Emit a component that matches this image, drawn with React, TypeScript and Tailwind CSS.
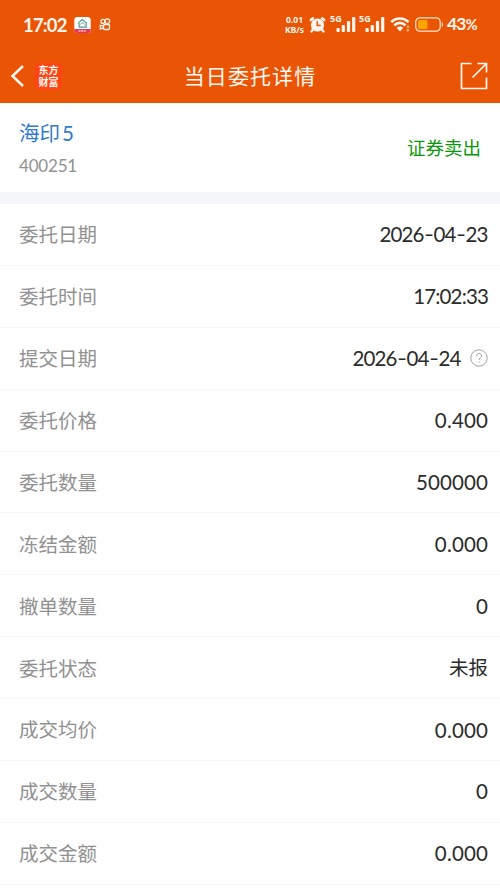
interface Detail {
  label: string;
  value: string;
  hint?: boolean;
}

const details: Detail[] = [
  { label: '委托日期', value: '2026-04-23' },
  { label: '委托时间', value: '17:02:33' },
  { label: '提交日期', value: '2026-04-24', hint: true },
  { label: '委托价格', value: '0.400' },
  { label: '委托数量', value: '500000' },
  { label: '冻结金额', value: '0.000' },
  { label: '撤单数量', value: '0' },
  { label: '委托状态', value: '未报' },
  { label: '成交均价', value: '0.000' },
  { label: '成交数量', value: '0' },
  { label: '成交金额', value: '0.000' },
];

function AlarmIcon() {
  return (
    <svg className="ml-[4px] h-[17px] w-[17px]" viewBox="0 0 17 17" fill="none">
      <circle cx="8.5" cy="9" r="6.6" fill="#fff5ec" />
      <path d="M1.8 4 4 2.2M15.2 4 13 2.2M3.8 13.6 2.6 15.4M13.2 13.6l1.2 1.8" stroke="#fff5ec" strokeWidth="2.4" strokeLinecap="round" />
      <path d="M8.3 5.3v4.2h3.4" stroke="#e95504" strokeWidth="1.5" />
    </svg>
  );
}

function Signal() {
  return (
    <div className="relative h-[17px] w-[27px]">
      <span className="absolute -top-[2px] left-0 font-['Open_Sans'] text-[9px] leading-[10px] font-bold">5G</span>
      <svg className="h-[17px] w-[27px]" viewBox="0 0 27 17" fill="#fff5ec">
        <rect x="6.5" y="12" width="3.2" height="4" rx="0.8" />
        <rect x="11.7" y="9" width="3.2" height="7" rx="0.8" />
        <rect x="16.9" y="5" width="3.2" height="11" rx="0.8" />
        <rect x="22.1" y="1" width="3.2" height="15" rx="0.8" />
      </svg>
    </div>
  );
}

function WifiIcon() {
  return (
    <svg className="ml-[4px] h-[17px] w-[21px]" viewBox="0 0 21 17" fill="none">
      <path d="M1.2 6.2C6 1.2 13.6 1.2 18.6 6.2M4.3 9.3c3.3-3.3 7.9-3.3 11.2 0" stroke="#fff5ec" strokeWidth="2.6" />
      <path d="M6.5 11.8c2-1.9 4.8-1.9 6.8 0L10 15.6Z" fill="#fff5ec" />
      <path d="m17.9 9.2 1.8 2.4h-3.6zM17.9 16l1.8-2.4h-3.6z" fill="#ffc98a" />
    </svg>
  );
}

function StatusBar() {
  return (
    <div className="flex h-[49px] items-center pr-[22px] pl-[23px] text-[#fff5ec]">
      <span className="w-[44px] font-['Lato'] text-[18.5px] leading-6 font-bold tracking-[-0.8px]">17:02</span>
      <svg className="ml-[7px] h-[16px] w-[17px]" viewBox="0 0 17 16" fill="none">
        <rect x="0.3" width="16.4" height="16" rx="3" fill="#fff" />
        <path d="M4.8 5.6 8.2 2.5l4 3.1v4.6H5.3z" stroke="#529c91" strokeWidth="1.2" />
        <path d="M6.3 7.5c1-2 3.5-2 4.5 0" stroke="#529c91" />
        <path d="M.3 12h16.4v1a3 3 0 0 1-3 3H3.3a3 3 0 0 1-3-3z" fill="#e43758" />
        <path d="M4.5 14h8" stroke="#fff" strokeWidth="1.2" strokeDasharray="2 .6" />
      </svg>
      <svg className="ml-[8px] h-[13px] w-[12px]" viewBox="0 0 12 13" fill="none" stroke="#fff5ec" strokeWidth="1.3">
        <circle cx="4.1" cy="3.4" r="2.1" />
        <circle cx="8.3" cy="3.2" r="2.4" />
        <rect x="4.5" y="6.5" width="6" height="5" rx="1.2" />
        <path d="M4.5 8.2 1.3 7.3v3.6l3.2-.9" />
      </svg>
      <div className="ml-auto flex items-center">
        <div className="w-[21px] text-center font-['Open_Sans'] text-[8.5px] leading-[10px] font-bold whitespace-nowrap">
          <div>0.01</div>
          <div>KB/s</div>
        </div>
        <AlarmIcon />
        <div className="ml-[4px] flex gap-[2px]">
          <Signal />
          <Signal />
        </div>
        <WifiIcon />
        <svg className="ml-[4px] h-[15px] w-[29px]" viewBox="0 0 29 15" fill="none">
          <rect x="0.8" y="0.8" width="24.4" height="13.4" rx="4" stroke="#ffe6d2" strokeWidth="1.2" />
          <rect x="3" y="3" width="9.5" height="9" rx="1.5" fill="#ffa500" />
          <path d="M26.8 5c1.6.8 1.6 4.2 0 5z" fill="#ffe6d2" />
        </svg>
        <span className="ml-[3px] w-[31px] font-['Lato'] text-[17.5px] leading-6 font-bold tracking-[-0.8px] whitespace-nowrap">
          43<span className="text-[14.5px]">%</span>
        </span>
      </div>
    </div>
  );
}

function NavBar() {
  return (
    <div className="grid h-[54px] grid-cols-[1fr_auto_1fr] items-center pr-[12px] pl-[10px] text-[#fff8f0]">
      <div className="flex items-center">
        <svg className="h-[24px] w-[15px]" viewBox="0 0 15 24" fill="none">
          <path d="M13 2 2.5 12 13 22" stroke="currentColor" strokeWidth="2.5" />
        </svg>
        <div className="ml-[10px] h-[27px] w-[27px] rounded-[4px] bg-[#ff4415] pt-px text-center font-['Noto_Sans_CJK_SC'] text-[10px] leading-[12px] font-bold whitespace-pre-line">
          {'东方\n财富'}
        </div>
      </div>
      <h1 className="-mt-[2px] ml-[2px] font-['Noto_Sans_CJK_SC'] text-[21px] leading-8 tracking-[1.1px]">当日委托详情</h1>
      <svg className="h-[28px] w-[28px] justify-self-end" viewBox="0 0 28 28" fill="none" stroke="currentColor" strokeWidth="1.7">
        <path d="M11.5 1.5H1.5v25h25v-11M17.5 1.5h9v9M26.5 1.5 12.5 15.5" />
      </svg>
    </div>
  );
}

// dashes sit at mid-digit height; dates and times are set tighter than amounts
function Value({ text }: { text: string }) {
  if (text.includes(':')) {
    return <span className="text-[20.5px] leading-[30px] tracking-[-0.85px]">{text}</span>;
  }
  const isDate = text.includes('-');
  return (
    <span className={isDate ? 'mt-px flex items-baseline text-[20.5px] leading-[30px]' : 'flex items-baseline text-[20.5px] leading-[30px]'}>
      {[...text].map((char, i) => {
        if (char === '-') {
          return (
            <span key={i} className="relative -top-[1px] w-[10px] scale-x-110 text-center font-['Inter'] text-[19px]">
              -
            </span>
          );
        }
        if (char === '.') {
          return <span key={i} className="w-[5.2px] text-center">.</span>;
        }
        if (char > '9') {
          return <span key={i} className="text-[19.5px]">{char}</span>;
        }
        return (
          <span key={i} className={isDate ? 'w-[11px] -indent-[0.4px]' : 'w-[12px] text-center'}>
            {char}
          </span>
        );
      })}
    </span>
  );
}

function DetailRow({ label, value, hint }: Detail) {
  return (
    <div className="flex h-[61.9px] items-center justify-between border-b border-[#f6f6f6] pr-[12px] pl-[19px]">
      <span className="mt-px text-[19.5px] text-[#919191]">{label}</span>
      <div className="flex items-center text-[#2b2b2b]">
        <Value text={value} />
        {hint && (
          <svg className="ml-[9px] h-[18px] w-[18px]" viewBox="0 0 18 18" fill="none" stroke="#a2a2a2">
            <circle cx="9" cy="9" r="8.2" />
            <path d="M6.6 7c0-3.3 5-3.3 5 0 0 1.8-2.5 1.9-2.5 4" />
            <path d="M9.1 12.3v1.3" />
          </svg>
        )}
      </div>
    </div>
  );
}

export default function App() {
  return (
    <div className="h-[892px] w-[500px] overflow-hidden bg-white font-['Lato','Noto_Sans_CJK_SC',sans-serif]">
      <header className="h-[103px] bg-[#e95504]">
        <StatusBar />
        <NavBar />
      </header>
      <section className="flex h-[89px] items-center justify-between px-[19px]">
        <div>
          <div className="mt-px text-[20.5px] leading-[30px] text-[#3179cb]">
            海印<span className="ml-[2px]">5</span>
          </div>
          <div className="mt-[5px] text-[17px] leading-[26px] tracking-[-0.2px] text-[#919191]">400251</div>
        </div>
        <span className="mt-[2px] text-[18.5px] text-[#0c960c]">证券卖出</span>
      </section>
      <div className="h-[12px] bg-[#f5f6f9]" />
      <main>
        {details.map((detail) => (
          <DetailRow key={detail.label} {...detail} />
        ))}
      </main>
    </div>
  );
}
